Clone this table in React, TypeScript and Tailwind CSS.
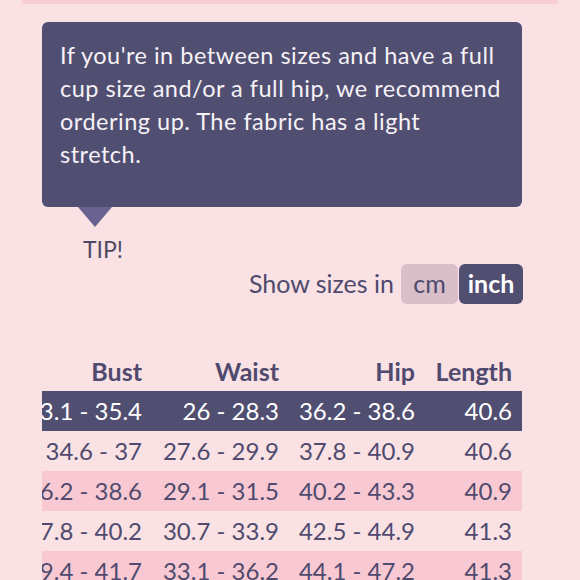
const rows = [
  { bust: '33.1 - 35.4', waist: '26 - 28.3', hip: '36.2 - 38.6', length: '40.6', bg: 'bg-[#504e71] text-white' },
  { bust: '34.6 - 37', waist: '27.6 - 29.9', hip: '37.8 - 40.9', length: '40.6', bg: 'text-[#4f4a6e]' },
  { bust: '36.2 - 38.6', waist: '29.1 - 31.5', hip: '40.2 - 43.3', length: '40.9', bg: 'bg-[#f8c9d2] text-[#4f4a6e]' },
  { bust: '37.8 - 40.2', waist: '30.7 - 33.9', hip: '42.5 - 44.9', length: '41.3', bg: 'text-[#4f4a6e]' },
  { bust: '39.4 - 41.7', waist: '33.1 - 36.2', hip: '44.1 - 47.2', length: '41.3', bg: 'bg-[#f8c9d2] text-[#4f4a6e]' },
]

function Row({ cells, className }: { cells: string[]; className: string }) {
  return (
    <div className={`flex h-10 items-center ${className}`}>
      <div className="ml-[-30px] flex whitespace-nowrap">
        <div className="w-[130px] text-right">{cells[0]}</div>
        <div className="w-[137px] text-right">{cells[1]}</div>
        <div className="w-[136px] text-right">{cells[2]}</div>
        <div className="w-[97px] text-right">{cells[3]}</div>
      </div>
    </div>
  )
}

export default function App() {
  return (
    <div className="h-[580px] w-[580px] overflow-hidden bg-[#f9e1e4] font-['Lato',sans-serif]">
      <div className="mx-[22px] h-1 bg-[#f8cdd6]" />

      {/* Tip bubble */}
      <div className="ml-[42px] mt-[18px] w-[480px]">
        <div className="h-[185px] rounded-md bg-[#504e71] px-[18px] pt-[17px] text-[23.5px] leading-[33px] tracking-[0.5px] text-[#f6f2f6]">
          If you're in between sizes and have a full
          <br />
          cup size and/or a full hip, we recommend
          <br />
          ordering up. The fabric has a light
          <br />
          stretch.
        </div>
        <div className="ml-[36px] h-0 w-0 border-x-[17px] border-t-[20px] border-x-transparent border-t-[#696290]" />
        <div className="ml-[41px] mt-[10px] text-[23px] leading-6 text-[#4e4a66]">TIP!</div>
      </div>

      {/* Unit toggle */}
      <div className="mr-[57px] mt-[3px] flex items-center justify-end text-[25px] text-[#4f4a6e]">
        <span className="mr-[7px]">Show sizes in</span>
        <span className="flex h-10 w-[57px] items-center justify-center rounded-md bg-[#d8bfc8]">cm</span>
        <span className="ml-px flex h-10 w-[64px] items-center justify-center rounded-md bg-[#504e71] font-bold text-white">inch</span>
      </div>

      {/* Size table */}
      <div className="ml-[42px] mt-[48px] w-[480px] overflow-hidden text-[24px]">
        <Row cells={['Bust', 'Waist', 'Hip', 'Length']} className="h-[39px] pb-0 text-[25px] font-bold text-[#4f4a6e]" />
        {rows.map((r) => (
          <Row key={r.bust} cells={[r.bust, r.waist, r.hip, r.length]} className={r.bg} />
        ))}
      </div>
    </div>
  )
}
